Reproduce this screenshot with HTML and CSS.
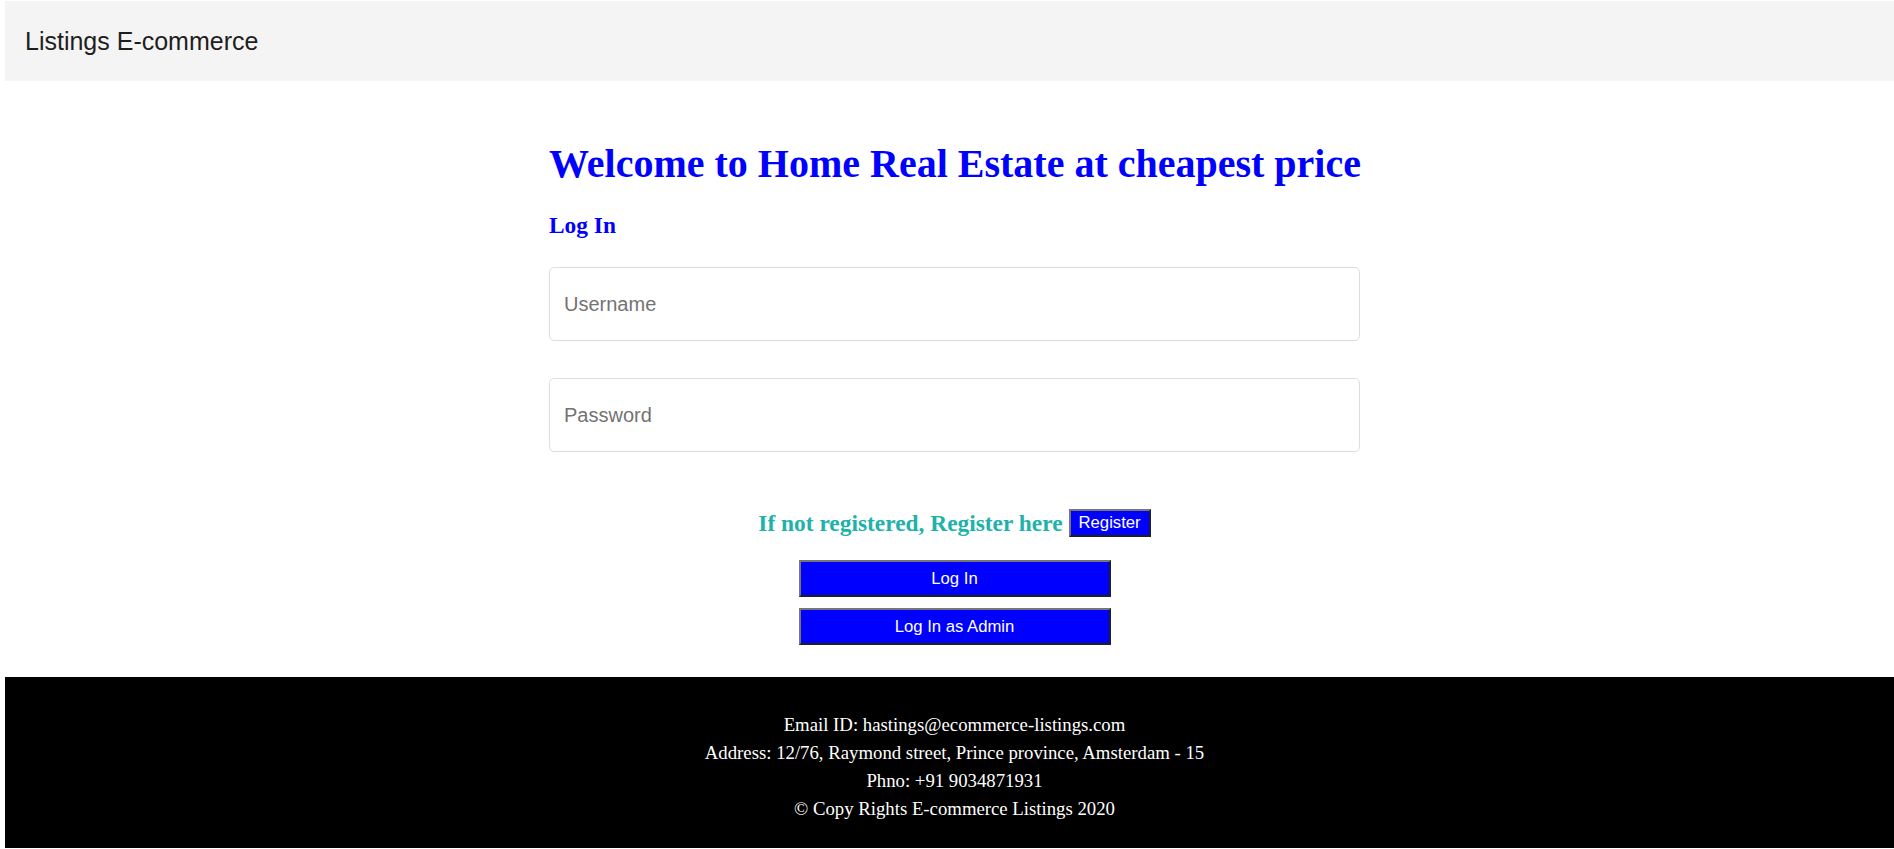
FILE: index.html
```html
<!DOCTYPE html>
<html lang="en">
<head>
<meta charset="utf-8">
<title>Listings E-commerce</title>
<link rel="stylesheet" href="styles.css">
</head>
<body>
<header class="navbar">
  <span class="brand">Listings E-commerce</span>
</header>
<main class="main">
  <div class="login">
    <h1 class="title">Welcome to Home Real Estate at cheapest price</h1>
    <h3 class="subtitle">Log In</h3>
    <form class="form">
      <input class="field" type="text" placeholder="Username">
      <input class="field" type="password" placeholder="Password">
      <div class="register-row">
        <span class="register-text">If not registered, Register here</span>
        <button type="button" class="btn btn-small">Register</button>
      </div>
      <button type="button" class="btn btn-wide first">Log In</button>
      <button type="button" class="btn btn-wide">Log In as Admin</button>
    </form>
  </div>
</main>
<footer class="footer">
  <p class="footer-line">Email ID: hastings@ecommerce-listings.com</p>
  <p class="footer-line">Address: 12/76, Raymond street, Prince province, Amsterdam - 15</p>
  <p class="footer-line">Phno: +91 9034871931</p>
  <p class="footer-line">© Copy Rights E-commerce Listings 2020</p>
</footer>
</body>
</html>
```
FILE: styles.css
```css
html, body {
  overflow: hidden;
}
body {
  margin: 0;
  padding: 1px 0 0 5px;
  background: #ffffff;
  font-family: "Liberation Serif", "Times New Roman", serif;
}
.navbar {
  height: 80px;
  background: #f4f4f4;
  display: flex;
  align-items: center;
  padding-left: 20px;
}
.brand {
  font-family: "Liberation Sans", Arial, sans-serif;
  font-size: 25px;
  color: #1e1e1e;
}
.main {
  padding: 60px 0 0 10px;
  display: flex;
  justify-content: center;
}
.login {
  width: 811px;
}
.title {
  margin: 0;
  font-size: 40px;
  line-height: 46px;
  font-weight: bold;
  color: #0000ff;
  white-space: nowrap;
}
.subtitle {
  margin: 25px 0 0;
  font-size: 23.4px;
  line-height: 27px;
  font-weight: bold;
  color: #0000ff;
}
.form {
  margin-top: 28px;
  display: flex;
  flex-direction: column;
  align-items: center;
}
.field {
  box-sizing: border-box;
  width: 100%;
  height: 74px;
  margin: 0 0 37px;
  padding: 0 14px;
  border: 1px solid #dedede;
  border-radius: 5px;
  font-family: "Liberation Sans", Arial, sans-serif;
  font-size: 20px;
  color: #495057;
  background: #fff;
}
.field:last-of-type {
  margin-bottom: 0;
}
.field::placeholder {
  color: #737373;
}
.register-row {
  margin-top: 57px;
  display: flex;
  align-items: center;
  justify-content: center;
  gap: 6px;
  white-space: nowrap;
}
.register-text {
  font-size: 23.4px;
  line-height: 27px;
  font-weight: bold;
  color: #20b2aa;
}
.btn {
  box-sizing: border-box;
  background: #0000ff;
  color: #ffffff;
  font-family: "Liberation Sans", Arial, sans-serif;
  font-size: 16.7px;
  border-style: solid;
  border-width: 2px;
  border-color: #767676 #1f1f1f #1f1f1f #767676;
  padding: 0 8px;
  cursor: pointer;
}
.btn-small {
  height: 28px;
}
.btn-wide {
  width: 312px;
  height: 37px;
  margin-top: 11px;
}
.btn-wide.first {
  margin-top: 23px;
}
.footer {
  margin-top: 32px;
  background: #000000;
  color: #ffffff;
  text-align: center;
  padding: 34px 0 25px 10px;
  white-space: nowrap;
}
.footer-line {
  margin: 0;
  font-size: 18.75px;
  line-height: 28px;
}
```
